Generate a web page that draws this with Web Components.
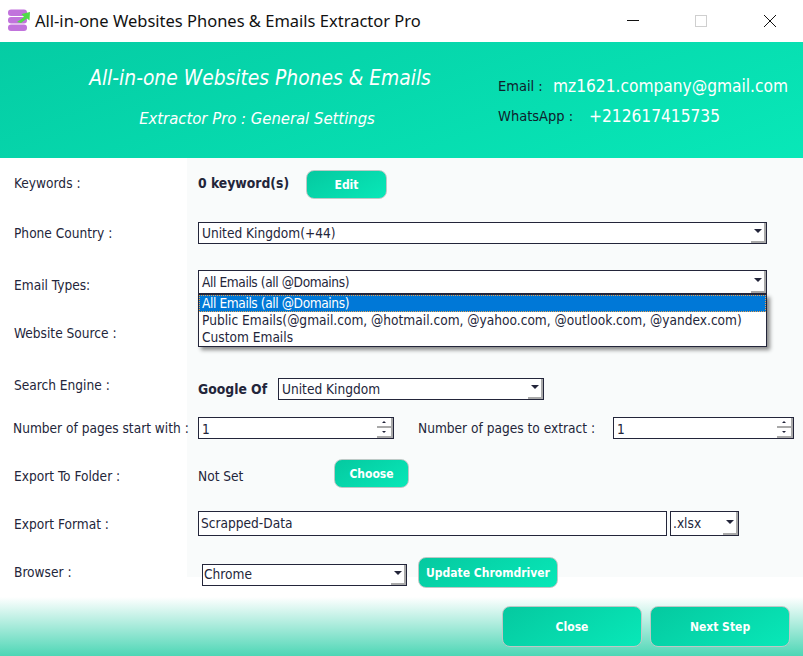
<!DOCTYPE html>
<html>
<head>
<meta charset="utf-8">
<title>All-in-one Websites Phones & Emails Extractor Pro</title>
<style>
  html, body { margin: 0; padding: 0; }
  body {
    width: 803px;
    height: 656px;
    overflow: hidden;
    background: #fff;
    color: #23253a;
    font: 13.6px "DejaVu Sans Condensed", "Noto Sans", sans-serif;
  }
</style>
</head>
<body>
<title-bar>All-in-one Websites Phones &amp; Emails Extractor Pro</title-bar>
<app-banner></app-banner>
<form-panel>
  <form-row label="Keywords :" style="margin-top:12px;height:29px;--shift:-2px">
    <strong style="font-size:13.8px;width:108px;margin-top:-3px">0 keyword(s)</strong>
    <grad-button style="width:81px;height:29px">Edit</grad-button>
  </form-row>
  <form-row label="Phone Country :" style="margin-top:23px;height:22px">
    <combo-box style="width:569px;height:22px">United Kingdom(+44)</combo-box>
  </form-row>
  <form-row label="Email Types:" style="margin-top:26px;height:24px;--shift:3px">
    <combo-box style="width:569px;height:24px">
      <span style="letter-spacing:-0.4px">All Emails (all @Domains)</span>
      <drop-list slot="list">
        <drop-item selected><span style="letter-spacing:-0.4px">All Emails (all @Domains)</span></drop-item>
        <drop-item>Public Emails(@gmail.com, @hotmail.com, @yahoo.com, @outlook.com, @yandex.com)</drop-item>
        <drop-item>Custom Emails</drop-item>
      </drop-list>
    </combo-box>
  </form-row>
  <form-row label="Website Source :" style="margin-top:28px;height:22px"></form-row>
  <form-row label="Search Engine :" style="margin-top:34px;height:22px;--shift:-4px">
    <strong style="font-size:13.8px;width:80px">Google Of</strong>
    <combo-box style="width:266px;height:22px">United Kingdom</combo-box>
  </form-row>
  <form-row label="Number of pages start with :" style="margin-top:17px;height:22px;--label-left:13px">
    <spin-box style="width:196px">1</spin-box>
    <span style="margin-left:24px;width:195px">Number of pages to extract :</span>
    <spin-box style="width:181px">1</spin-box>
  </form-row>
  <form-row label="Export To Folder :" style="margin-top:20px;height:29px;--shift:2px">
    <span style="width:136px;margin-top:4px">Not Set</span>
    <grad-button style="width:75px;height:29px">Choose</grad-button>
  </form-row>
  <form-row label="Export Format :" style="margin-top:23px;height:25px">
    <combo-box plain style="width:469px;height:25px;--text-left:2px">Scrapped-Data</combo-box>
    <combo-box style="width:69px;height:25px;margin-left:3px;--text-left:2px">.xlsx</combo-box>
  </form-row>
  <form-row label="Browser :" style="margin-top:21px;height:31px;--shift:-1px">
    <combo-box style="width:205px;height:22px;margin:4px 11px 0 4px;--text-left:1px">Chrome</combo-box>
    <grad-button style="width:140px;height:31px">Update Chromdriver</grad-button>
  </form-row>
</form-panel>
<app-footer>
  <grad-button style="width:140px;height:41px">Close</grad-button>
  <grad-button style="width:140px;height:41px">Next Step</grad-button>
</app-footer>

<script>
class TitleBar extends HTMLElement {
  constructor() {
    super();
    this.attachShadow({mode: 'open'});
    this.shadowRoot.innerHTML = `
      <style>
        :host { display: flex; align-items: center; height: 42px; background: #fff; color: #111; }
        .logo { margin-left: 7px; width: 24px; height: 24px; flex: none; }
        .name { margin: -2px 0 0 4px; font-size: 16.5px; flex: 1; font-family: "Noto Sans", sans-serif; }
        .win { width: 14px; height: 14px; flex: none; }
      </style>
      <svg class="logo" viewBox="0 0 24 24">
        <rect x="1" y="0.5" width="19" height="6.5" rx="3" fill="#c173dc"/>
        <rect x="1" y="8" width="19" height="6.5" rx="3" fill="#c173dc"/>
        <rect x="1" y="15.5" width="19" height="6.5" rx="3" fill="#c173dc"/>
        <path d="M10 13L17 8L14.5 5L23 3L22.5 11.5L20 9.5L14 14Z" fill="#4fdc4a"/>
      </svg>
      <span class="name"><slot></slot></span>
      <svg class="win" style="margin-right:54px" viewBox="0 0 14 14"><path d="M1 6.5H13" stroke="#111" fill="none"/></svg>
      <svg class="win" style="margin-right:55px" viewBox="0 0 14 14"><rect x="1.5" y="1.5" width="11" height="11" stroke="#cfcfcf" fill="none"/></svg>
      <svg class="win" style="margin-right:26px" viewBox="0 0 14 14"><path d="M1 1L13 13M13 1L1 13" stroke="#111" fill="none"/></svg>
    `;
  }
}

class AppBanner extends HTMLElement {
  constructor() {
    super();
    this.attachShadow({mode: 'open'});
    this.shadowRoot.innerHTML = `
      <style>
        :host {
          display: grid;
          grid-template-columns: 498px 1fr;
          height: 116px;
          background: linear-gradient(160deg, #05cca4, #08e8b8);
          color: #fff;
        }
        .left { text-align: center; font-style: italic; padding: 21px 0 0 22px; width: 476px; }
        .big { font-size: 20.8px; line-height: 30px; }
        .sub { font-size: 16.5px; height: 22px; line-height: 24px; overflow: hidden; margin: 14px 6px 0 0; }
        .right { padding-top: 29px; }
        .line { display: flex; align-items: center; height: 30px; color: #10202c; font-size: 14.5px; }
        .val { color: #fff; font-size: 17.2px; }
      </style>
      <div class="left">
        <div class="big">All-in-one Websites Phones &amp; Emails</div>
        <div class="sub">Extractor Pro : General Settings</div>
      </div>
      <div class="right">
        <div class="line"><span style="width:55px">Email :</span><span class="val">mz1621.company@gmail.com</span></div>
        <div class="line"><span style="width:91px">WhatsApp :</span><span class="val">+212617415735</span></div>
      </div>
    `;
  }
}

class FormPanel extends HTMLElement {
  constructor() {
    super();
    this.attachShadow({mode: 'open'});
    this.shadowRoot.innerHTML = `
      <style>
        :host {
          display: flex;
          flex-direction: column;
          height: 439px;
          background: linear-gradient(#f9fbfb, #f9fbfb) 187px 0 / 616px 419px no-repeat;
        }
        ::slotted(form-row) { flex: none; }
      </style>
      <slot></slot>
    `;
  }
}

class FormRow extends HTMLElement {
  static get observedAttributes() { return ['label']; }
  constructor() {
    super();
    this.attachShadow({mode: 'open'});
    this.shadowRoot.innerHTML = `
      <style>
        :host { display: flex; align-items: center; position: relative; }
        .label {
          width: 198px;
          box-sizing: border-box;
          flex: none;
          padding-left: var(--label-left, 14px);
          margin-top: calc(var(--shift, 0px) * 2);
          white-space: nowrap;
        }
        .ctl { display: flex; align-items: center; flex: 1; height: 100%; }
      </style>
      <div class="label"></div>
      <div class="ctl"><slot></slot></div>
    `;
  }
  attributeChangedCallback(name, was, now) {
    this.shadowRoot.querySelector('.label').textContent = now;
  }
}

class ComboBox extends HTMLElement {
  constructor() {
    super();
    this.attachShadow({mode: 'open'});
    this.shadowRoot.innerHTML = `
      <style>
        :host {
          display: block;
          position: relative;
          flex: none;
          box-sizing: border-box;
          border: 1px solid #23253a;
          background: #fff;
          line-height: 1;
        }
        .text {
          position: absolute;
          left: var(--text-left, 3px);
          top: 0;
          bottom: 0;
          display: flex;
          align-items: center;
          padding-top: 1px;
          white-space: nowrap;
        }
        .btn {
          position: absolute;
          right: 0;
          bottom: 0;
          width: 15px;
          height: 100%;
          box-sizing: border-box;
          border-right: 2px solid #a9a9a9;
          border-bottom: 2px solid #a9a9a9;
        }
        .btn::after {
          content: "";
          position: absolute;
          left: 3px;
          top: 50%;
          margin-top: -3px;
          border: 4px solid transparent;
          border-top: 4px solid #23253a;
          border-bottom: 0;
        }
        :host([plain]) .btn { display: none; }
      </style>
      <div class="text"><slot></slot></div>
      <div class="btn"></div>
      <slot name="list"></slot>
    `;
  }
}

class DropList extends HTMLElement {
  constructor() {
    super();
    this.attachShadow({mode: 'open'});
    this.shadowRoot.innerHTML = `
      <style>
        :host {
          display: block;
          position: absolute;
          left: -1px;
          right: -1px;
          top: 23px;
          z-index: 5;
          box-sizing: border-box;
          background: #fff;
          border: 1px solid #23253a;
          box-shadow: 3px 3px 4px rgba(0, 0, 0, 0.45);
        }
      </style>
      <slot></slot>
    `;
  }
}

class DropItem extends HTMLElement {
  constructor() {
    super();
    this.attachShadow({mode: 'open'});
    this.shadowRoot.innerHTML = `
      <style>
        :host {
          display: flex;
          align-items: center;
          box-sizing: border-box;
          height: 17px;
          padding: 1px 0 0 3px;
          white-space: nowrap;
        }
        :host([selected]) {
          background: #0078d7;
          color: #fff;
          outline: 1px dotted #e8a050;
          outline-offset: -1px;
        }
      </style>
      <slot></slot>
    `;
  }
}

class SpinBox extends HTMLElement {
  constructor() {
    super();
    this.attachShadow({mode: 'open'});
    this.shadowRoot.innerHTML = `
      <style>
        :host {
          display: flex;
          align-items: center;
          position: relative;
          flex: none;
          box-sizing: border-box;
          height: 22px;
          padding: 1px 0 0 3px;
          border: 1px solid #23253a;
          background: #fff;
        }
        .up, .down {
          position: absolute;
          right: 0;
          width: 16px;
          height: 10px;
          box-sizing: border-box;
          border-right: 2px solid #a9a9a9;
          border-bottom: 2px solid #a9a9a9;
        }
        .up { top: 0; }
        .down { top: 10px; }
        .up::after, .down::after {
          content: "";
          position: absolute;
          left: 5px;
          top: 3px;
          border: 2px solid transparent;
        }
        .up::after { border-bottom: 2px solid #23253a; border-top: 0; }
        .down::after { border-top: 2px solid #23253a; border-bottom: 0; }
      </style>
      <slot></slot>
      <div class="up"></div>
      <div class="down"></div>
    `;
  }
}

class GradButton extends HTMLElement {
  constructor() {
    super();
    this.attachShadow({mode: 'open'});
    this.shadowRoot.innerHTML = `
      <style>
        :host {
          display: flex;
          align-items: center;
          justify-content: center;
          flex: none;
          box-sizing: border-box;
          border: 1px solid #bdc9c6;
          border-radius: 8px;
          background: linear-gradient(150deg, #05c9a0, #08e8b8);
          color: #fff;
          font-size: 12px;
          font-weight: 700;
          white-space: nowrap;
        }
      </style>
      <slot></slot>
    `;
  }
}

class AppFooter extends HTMLElement {
  constructor() {
    super();
    this.attachShadow({mode: 'open'});
    this.shadowRoot.innerHTML = `
      <style>
        :host {
          display: flex;
          justify-content: flex-end;
          align-items: flex-start;
          gap: 8px;
          height: 59px;
          box-sizing: border-box;
          padding: 9px 13px 0 0;
          background: linear-gradient(#fff, #4dd6b5);
        }
      </style>
      <slot></slot>
    `;
  }
}

customElements.define('title-bar', TitleBar);
customElements.define('app-banner', AppBanner);
customElements.define('form-panel', FormPanel);
customElements.define('form-row', FormRow);
customElements.define('combo-box', ComboBox);
customElements.define('drop-list', DropList);
customElements.define('drop-item', DropItem);
customElements.define('spin-box', SpinBox);
customElements.define('grad-button', GradButton);
customElements.define('app-footer', AppFooter);
</script>
</body>
</html>
